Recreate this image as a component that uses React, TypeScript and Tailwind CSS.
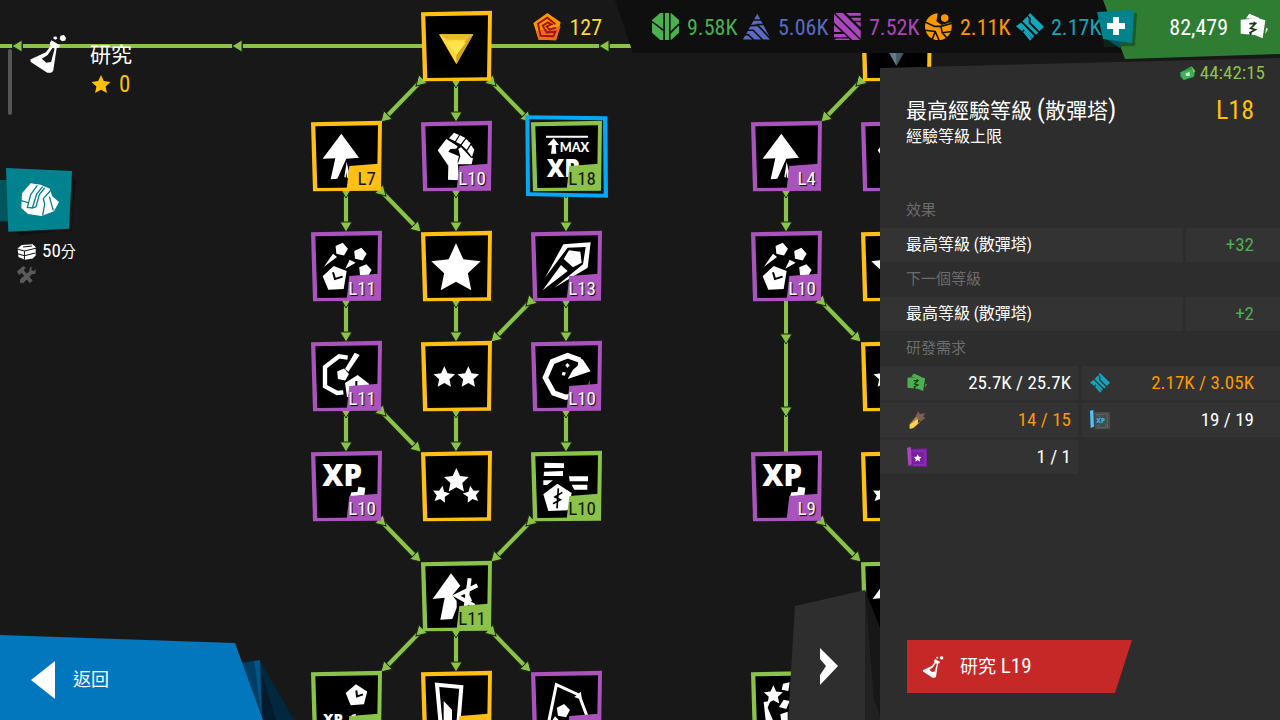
import React from 'react';

type Tone = 'gold' | 'purple' | 'green';

interface TreeNode {
  col: number;
  row: number;
  tone: Tone;
  icon: keyof typeof glyphs;
  title: string;
  level?: string;
  hasBadge?: boolean;
  selected?: boolean;
}

const toneColors: Record<Tone, string> = {
  gold: '#ffc013',
  purple: '#ab53bd',
  green: '#8bc34a',
};

const pentagon = (cx: number, cy: number, r: number, turn = 0) =>
  Array.from({ length: 5 }, (_, i) => {
    const a = ((i * 72 - 90 + turn) * Math.PI) / 180;
    return `${(cx + r * Math.cos(a)).toFixed(1)},${(cy + r * Math.sin(a)).toFixed(1)}`;
  }).join(' ');

const star = (cx: number, cy: number, r: number, turn = 0) =>
  Array.from({ length: 10 }, (_, i) => {
    const a = ((i * 36 - 90 + turn) * Math.PI) / 180;
    const d = i % 2 ? r * 0.48 : r;
    return `${(cx + d * Math.cos(a)).toFixed(1)},${(cy + d * Math.sin(a)).toFixed(1)}`;
  }).join(' ');

// All node glyphs share a 216 x 216 box
const glyphs = {
  goldGem: (
    <>
      <path d="M54 70H157L106 160Z" fill="#fdd835" />
      <path d="M54 70H157L136 86H78Z" fill="#e8bb2a" />
      <path d="M157 70L106 160L106 132L136 86Z" fill="#d3a51f" />
      <path d="M78 95L106 90L134 95L106 132Z" fill="#ffe44f" />
    </>
  ),
  steelGem: (
    <>
      <path d="M54 72H157L106 164Z" fill="#607d8b" />
      <path d="M157 72L106 164V120Z" fill="#455a64" />
    </>
  ),
  arrow: (
    <>
      <path d="M91 38L144 110L106 113L100 126L79 173L59 175L73 112L35 113Z" />
      <path d="M100 168L107 122L113 150V170H108L106 152L104 170Z" />
    </>
  ),
  fist: (
    <>
      <path d="M50 88L76 54L110 76L106 83L88 84L82 92L114 106L110 120L114 178L81 176L82 134Z" />
      <path d="M84 52L99 35L114 42L102 61ZM117 43L133 51L119 70L105 63ZM135 54L149 67L137 86L122 73ZM150 72L160 86L153 108L139 90Z" />
      <path d="M112 84L120 78L150 110L156 112L152 130H110L118 106Z" />
    </>
  ),
  maxXp: (
    <>
      <path d="M45 44H171V50H45ZM68 52L84 72H74L76 98H60L63 73H49Z" />
      <text x="86" y="94" fontSize="38" fontWeight="900" fontFamily="Lato, sans-serif">MAX</text>
      <text x="47" y="168" fontSize="73" fontWeight="800" fontFamily="'Open Sans', sans-serif">XP</text>
    </>
  ),
  shots: (
    <>
      <polygon points={pentagon(91, 55, 20, 12)} />
      <polygon points={pentagon(147, 70, 20, 12)} />
      <polygon points={pentagon(162, 119, 20, 12)} />
      <path d="M66 68L78 78L39 107ZM116 86L134 95L103 113Z" />
      <path d="M35 136L68 105L107 120L98 174L52 176Z" />
      <path d="M66 124L72 144L95 137" fill="none" stroke="#000" strokeWidth="6" />
    </>
  ),
  dart: (
    <>
      <path d="M97 40L179 34L170 110L70 170L156 100L164 48L110 50L42 140Z" />
      <path d="M114 58L148 62L152 95L126 109L98 84Z" />
      <path d="M90 102L110 120L35 178Z" />
    </>
  ),
  radar: (
    <>
      <path d="M110 50L84 46L42 78V136L78 156L97 154" fill="none" stroke="#fff" strokeWidth="13" />
      <polygon points={pentagon(95, 101, 19, 12)} />
      <path d="M131 35L146 42L112 92L102 84Z" />
      <path d="M102 126L140 102L174 128V168H108Z" />
      <path d="M136 120V138H152" fill="none" stroke="#000" strokeWidth="6" />
    </>
  ),
  orbit: (
    <>
      <path d="M148 58L110 44L64 62L43 110L68 156L104 169L130 163" fill="none" stroke="#fff" strokeWidth="16" />
      <path d="M144 50L156 56L179 91L110 114L126 86L140 74Z" />
      <path d="M109 66L116 73L109 81L103 73ZM95 92L105 95L101 104L92 102ZM173 128L176 116L174 136Z" />
    </>
  ),
  oneStar: <polygon points={star(105, 115, 78)} />,
  twoStars: (
    <>
      <polygon points={star(70, 110, 34)} />
      <polygon points={star(142, 110, 34)} />
    </>
  ),
  threeStars: (
    <>
      <polygon points={star(106, 90, 39)} />
      <polygon points={star(60, 131, 27, 10)} />
      <polygon points={star(152, 131, 27, -10)} />
    </>
  ),
  xpPlus: (
    <>
      <text x="34" y="106" fontSize="88" fontWeight="800" fontFamily="'Open Sans', sans-serif">XP</text>
      <path d="M142 107L163 110L160 132L117 138L121 124L139 123Z" />
    </>
  ),
  report: (
    <>
      <path d="M40 35L99 37V51H40ZM39 62L96 60V75H38ZM37 88H66L48 102H37ZM114 76H171V91H116ZM122 101H169V116H130Z" />
      <path d="M37 130L79 98L122 126L110 178L52 180Z" />
      <path d="M82 112L78 172M94 124L72 138L88 146L66 158" fill="none" stroke="#000" strokeWidth="5" />
    </>
  ),
  advance: (
    <>
      <path d="M90 37L118 74L94 103L107 120V140L94 174L58 176L71 110L35 114Z" />
      <path d="M146 52L134 138M169 73L106 104L160 134M132 88L148 122" fill="none" stroke="#fff" strokeWidth="12" />
    </>
  ),
  xpClock: (
    <>
      <polygon points={pentagon(137, 74, 34, -4)} />
      <path d="M136 58L138 76L156 70" fill="none" stroke="#000" strokeWidth="6" />
      <text x="36" y="158" fontSize="44" fontWeight="800" fontFamily="'Open Sans', sans-serif">XP</text>
      <path d="M122 132L134 128V140H120Z" />
    </>
  ),
  gate: (
    <>
      <path d="M48 41L121 48L111 170H60Z" fill="none" stroke="#fff" strokeWidth="12" />
      <path d="M68 90L93 116V170H68Z" />
    </>
  ),
  kite: (
    <>
      <path d="M52 158L76 41L144 72L167 133" fill="none" stroke="#fff" strokeWidth="9" />
      <path d="M130 78L150 62L152 86Z" />
      <polygon points={pentagon(96, 120, 21, 10)} />
      <path d="M72 136L84 148L60 173L64 148Z" />
    </>
  ),
  burst: (
    <>
      <polygon points={star(67, 73, 30)} />
      <path d="M38 93L58 90L50 110L66 148H44ZM96 38L116 34L112 60L92 56ZM84 108L98 86L116 90L106 114Z" />
      <path d="M88 130L110 122V158H92Z" />
    </>
  ),
};

const nodes: TreeNode[] = [
  { col: 456, row: 46, tone: 'gold', icon: 'goldGem', title: '散彈塔' },
  { col: 346, row: 156, tone: 'gold', icon: 'arrow', title: '威力', level: 'L7' },
  { col: 456, row: 156, tone: 'purple', icon: 'fist', title: '力量', level: 'L10' },
  { col: 566, row: 156, tone: 'green', icon: 'maxXp', title: '最高經驗等級', level: 'L18', selected: true },
  { col: 346, row: 266, tone: 'purple', icon: 'shots', title: '攻擊速度', level: 'L11' },
  { col: 456, row: 266, tone: 'gold', icon: 'oneStar', title: '一星' },
  { col: 566, row: 266, tone: 'purple', icon: 'dart', title: '彈速', level: 'L13' },
  { col: 346, row: 376, tone: 'purple', icon: 'radar', title: '轉速', level: 'L11' },
  { col: 456, row: 376, tone: 'gold', icon: 'twoStars', title: '二星' },
  { col: 566, row: 376, tone: 'purple', icon: 'orbit', title: '範圍', level: 'L10' },
  { col: 346, row: 486, tone: 'purple', icon: 'xpPlus', title: '經驗', level: 'L10' },
  { col: 456, row: 486, tone: 'gold', icon: 'threeStars', title: '三星' },
  { col: 566, row: 486, tone: 'green', icon: 'report', title: '價格', level: 'L10' },
  { col: 456, row: 596, tone: 'green', icon: 'advance', title: '升級', level: 'L11' },
  { col: 346, row: 706, tone: 'green', icon: 'xpClock', title: '經驗時間', hasBadge: true },
  { col: 456, row: 706, tone: 'gold', icon: 'gate', title: '能力', hasBadge: true },
  { col: 566, row: 706, tone: 'purple', icon: 'kite', title: '投射', hasBadge: true },
  { col: 896, row: 46, tone: 'gold', icon: 'steelGem', title: '鋼塔' },
  { col: 786, row: 156, tone: 'purple', icon: 'arrow', title: '威力', level: 'L4' },
  { col: 896, row: 156, tone: 'purple', icon: 'fist', title: '力量' },
  { col: 786, row: 266, tone: 'purple', icon: 'shots', title: '攻擊速度', level: 'L10' },
  { col: 896, row: 266, tone: 'gold', icon: 'oneStar', title: '一星' },
  { col: 896, row: 376, tone: 'gold', icon: 'twoStars', title: '二星' },
  { col: 786, row: 486, tone: 'purple', icon: 'xpPlus', title: '經驗', level: 'L9' },
  { col: 896, row: 486, tone: 'gold', icon: 'threeStars', title: '三星' },
  { col: 896, row: 596, tone: 'green', icon: 'advance', title: '升級' },
  { col: 786, row: 706, tone: 'green', icon: 'burst', title: '爆發' },
];

// [fromX, fromY, toX, toY] between node centres
const links = [
  [456, 46, 346, 156], [456, 46, 456, 156], [456, 46, 566, 156],
  [346, 156, 346, 266], [346, 156, 456, 266], [456, 156, 456, 266], [566, 156, 566, 266],
  [346, 266, 346, 376], [456, 266, 456, 376], [566, 266, 566, 376], [566, 266, 456, 376],
  [346, 376, 346, 486], [346, 376, 456, 486], [456, 376, 456, 486], [566, 376, 566, 486],
  [346, 486, 456, 596], [566, 486, 456, 596],
  [456, 596, 346, 706], [456, 596, 456, 706], [456, 596, 566, 706],
  [896, 46, 786, 156], [786, 156, 786, 266], [786, 266, 896, 376], [786, 486, 896, 596],
];

const Arrowhead = ({ x, y, angle }: { x: number; y: number; angle: number }) => (
  <path d="M0 0L-10 -6V6Z" fill="#8bc34a" stroke="#1c2a12" transform={`translate(${x} ${y}) rotate(${angle})`} />
);

const Link = ({ points }: { points: number[] }) => {
  const [x1, y1, x2, y2] = points;
  const dx = Math.sign(x2 - x1);
  const dy = Math.sign(y2 - y1);
  const angle = (Math.atan2(dy, dx) * 180) / Math.PI;
  const tip = dx ? 5 : 7;
  const back = dx ? 7 : 10;
  const ax = x1 + dx * 35;
  const ay = y1 + 35;
  const bx = x2 - dx * 35;
  const by = y2 - 34;
  const line = `M${ax} ${ay}L${bx - dx * back} ${by - dy * back}`;
  return (
    <g>
      <path d={line} stroke="#1c2a12" strokeWidth="6" />
      <path d={line} stroke="#8bc34a" strokeWidth="4" />
      <Arrowhead x={ax + dx * tip} y={ay + dy * tip} angle={angle} />
      <Arrowhead x={bx} y={by} angle={angle} />
    </g>
  );
};

const ResearchNode = ({ node }: { node: TreeNode }) => {
  const color = toneColors[node.tone];
  return (
    <button
      type="button"
      aria-label={node.level ? `${node.title} ${node.level}` : node.title}
      className="absolute size-[72px]"
      style={{ left: node.col - 35, top: node.row - 35 }}
    >
      <svg viewBox="0 0 216 216" className="size-full overflow-visible" fill="#fff">
        {node.selected && (
          <>
            <path d="M-17 -17L229 -14L231 230L-15 225Z" fill="#03a9f4" />
            <path d="M-5 -5L216 -2L218 218L-3 214Z" fill="#10181c" />
          </>
        )}
        <path d="M0 4L213 -1L210 209L6 211Z" fill={color} />
        <path d="M13 16L201 13L198 199L19 201Z" fill="#000" />
        {glyphs[node.icon]}
        {(node.level || node.hasBadge) && <path d="M115 135L203 128L201 204H107Z" fill={color} />}
      </svg>
      {node.level && (
        <span
          className={`absolute right-[7px] bottom-1 text-[19px] leading-5 ${
            node.tone === 'purple' ? 'text-white [text-shadow:1px_1px_1px_#000]' : 'text-[#151515]'
          }`}
        >
          {node.level}
        </span>
      )}
    </button>
  );
};

const ResearchTree = () => (
  <div className="absolute inset-0 overflow-hidden">
    <svg className="absolute inset-0 size-full" fill="none">
      <path d="M0 46H631" stroke="#8bc34a" strokeWidth="4" />
      {[12, 232, 599].map((x) => (
        <g key={x}>
          <path d={`M${x} 46H${x + 11}`} stroke="#1c2a12" strokeWidth="4" />
          <Arrowhead x={x} y={46} angle={180} />
        </g>
      ))}
      <path d="M786 300V452" stroke="#8bc34a" strokeWidth="4" />
      <Arrowhead x={786} y={344} angle={90} />
      <Arrowhead x={786} y={417} angle={90} />
      {links.map((points) => (
        <Link key={points.join('-')} points={points} />
      ))}
    </svg>
    {nodes.map((node) => (
      <ResearchNode key={`${node.col}-${node.row}`} node={node} />
    ))}
  </div>
);

const FlaskIcon = ({ className }: { className: string }) => (
  <svg viewBox="0 0 104 110" className={className} fill="currentColor">
    <path
      fillRule="evenodd"
      d="M62 15L68 19L84 28L87 31L84 36L77 38L67 104L61 109L50 109L2 78L1 71L46 50L60 31L57 24ZM66 36L51 58L34 69L47 80L61 78L71 40Z"
    />
    <path d="M88 2L98 0L104 8L102 16L93 18L86 12ZM68 5L76 4L79 10L74 14L68 11Z" />
  </svg>
);

const CashIcon = ({ className }: { className: string }) => (
  <svg viewBox="0 0 84 80" className={className} fill="currentColor">
    <path d="M28 0L60 14L40 16L18 14ZM2 18L54 14L76 20L68 74L44 64L2 60ZM78 42L84 46L76 60Z" />
    <path d="M28 30L46 30L32 44L46 48L28 58M44 24L42 30M34 58L30 64" fill="none" stroke="#123c17" strokeWidth="5" />
  </svg>
);

const CyanOreIcon = ({ className }: { className: string }) => (
  <svg viewBox="0 0 88 88" className={className} fill="currentColor">
    <path d="M44 0L88 43L74 57L46 30V16L38 8Z" />
    <path d="M36 10L40 16V32L70 62L63 68L20 26Z" />
    <path d="M0 42L16 30L57 72L51 79L22 50L20 58Z" />
    <path d="M22 60L29 56L50 80L44 87Z" />
  </svg>
);

const resources = [
  {
    name: '標量',
    amount: '9.58K',
    color: 'text-[#4caf50]',
    icon: (
      <>
        <path d="M26 0H60L85 22V62L60 85H26L0 62V22Z" />
        <path d="M38 0V85M56 0V85M0 27L38 56M85 35L56 64" stroke="#0f0f0f" strokeWidth="5" />
      </>
    ),
  },
  {
    name: '向量',
    amount: '5.06K',
    color: 'text-[#5c6bc0]',
    icon: (
      <>
        <path d="M45 2L88 83H0Z" />
        <path d="M28 22H62M22 40L46 38L88 83M10 54H32L62 85M0 68H16L34 85M42 36H74" fill="none" stroke="#0f0f0f" strokeWidth="5" />
      </>
    ),
  },
  {
    name: '矩陣',
    amount: '7.52K',
    color: 'text-[#ab47bc]',
    icon: (
      <>
        <path d="M0 0H28L84 56V85H58L0 30Z" />
        <path d="M38 0H84V9H48ZM53 15H84V24H62ZM67 29H84V45ZM0 38L24 60H0ZM0 66H32L42 76H0ZM8 80H46L50 85H0Z" />
        <path d="M0 0L84 84" stroke="#0f0f0f" strokeWidth="5" />
      </>
    ),
  },
  {
    name: '張量',
    amount: '2.11K',
    color: 'text-[#ff9800]',
    icon: (
      <>
        <circle cx="42" cy="43" r="42" />
        <path d="M40 0L36 26L52 38L84 28V0Z" fill="#0f0f0f" />
        <circle cx="62" cy="16" r="12" />
        <path d="M0 28L30 42L50 42L85 32M0 54L32 58L44 85M32 58L22 85M50 42L54 62L85 58M56 64L72 82" fill="none" stroke="#0f0f0f" strokeWidth="5" />
      </>
    ),
  },
];

const TopBar = () => (
  <header className="relative z-10 flex h-[53px] justify-end text-[22px]">
    <div className="flex items-center gap-2 pr-[13px] text-[#fdd835]">
      <svg viewBox="0 0 82 84" className="size-7">
        <path d="M42 0L82 28L68 82L16 80L0 30Z" fill="#ff9800" />
        <path d="M16 80L8 54L82 40L68 82Z" fill="#ef6c1a" />
        <path
          d="M66 34L42 14L14 32L22 68L60 70L66 56L40 58L28 38L44 28L54 34L40 40L48 50L68 44"
          fill="none"
          stroke="#a31515"
          strokeWidth="6"
        />
      </svg>
      <span className="pt-0.5">127</span>
    </div>
    <div className="flex items-center bg-[#0f0f0f] pl-[37px] [clip-path:polygon(0_0,100%_0,100%_100%,18px_100%)]">
      {resources.map((resource) => (
        <div key={resource.name} className={`flex w-[91px] items-center gap-[7px] ${resource.color}`}>
          <svg viewBox="0 0 88 88" className="size-7 shrink-0" fill="currentColor" aria-label={resource.name}>
            {resource.icon}
          </svg>
          <span className="pt-0.5">{resource.amount}</span>
        </div>
      ))}
      <div className="flex w-[124px] items-center gap-[7px] text-[#12a5bb]">
        <CyanOreIcon className="size-7 shrink-0" />
        <span className="pt-0.5">2.17K</span>
      </div>
    </div>
    <div className="relative -ml-[37px] flex h-[59px] w-[177px] items-center justify-end gap-3 bg-[#2e7d32] pr-3 pb-1.5 text-white [clip-path:polygon(0_0,100%_0,100%_54px,22px_100%)]">
      <span className="pt-0.5">82,479</span>
      <CashIcon className="size-7" />
    </div>
    <button type="button" aria-label="購買" className="absolute top-[9px] right-[143px] h-[40px] w-[41px]">
      <svg viewBox="0 0 41 40" className="size-full">
        <path d="M5 5L41 4L39 37L8 38Z" fill="#0a3a1a" opacity=".5" />
        <path d="M10 30H26L24 39Z" fill="#005662" />
        <path d="M1 3L38 1L36 34L7 30Z" fill="#00838f" />
        <path d="M17 8H23V14H29V20H23V26H17V20H11V14H17Z" fill="#fff" />
      </svg>
    </button>
  </header>
);

const SideMenu = () => (
  <div className="flex w-[300px] flex-col justify-between">
    <div>
      <div className="-mt-5 flex">
        <div className="mt-4 ml-2 h-[66px] w-1 rounded-full bg-[#555]" />
        <FlaskIcon className="mt-0.5 ml-[18px] h-[38px] w-[36px] text-white" />
        <div className="ml-6">
          <h1 className="mt-2 text-[21px] leading-7 text-white">研究</h1>
          <div className="flex items-center gap-2 text-[23px] leading-8 text-[#ffc107]">
            <svg viewBox="0 0 20 20" className="ml-px size-5" fill="currentColor">
              <polygon points={star(10, 10, 10)} />
            </svg>
            0
          </div>
        </div>
      </div>
      <button type="button" aria-label="背包" className="mt-[53px] block h-[68px] w-[76px]">
        <svg viewBox="0 0 228 204" className="size-full">
          <path d="M0 36H30V160H0Z" fill="#00565c" />
          <path d="M40 190L216 190L220 30L228 40L212 186L60 202Z" fill="#000" opacity=".35" />
          <path d="M18 0L216 9L207 182L25 191Z" fill="#00838f" />
          <path d="M92 46L122 50L150 62L156 84L177 102L162 130L124 144L84 138L64 120L66 76Z" fill="#fff" />
          <path
            d="M112 52L92 80L82 118L97 120L110 78L128 56M134 60L118 80L108 116L98 120M153 66L130 92L134 108L128 142M148 86L160 128M64 98L84 104"
            fill="none"
            stroke="#00838f"
            strokeWidth="4"
          />
        </svg>
      </button>
      <div className="mt-[3px] ml-[17px] flex items-center gap-[6px] text-white">
        <svg viewBox="0 0 56 46" className="h-4 w-[19px]" fill="currentColor">
          <path d="M2 12L14 2L46 0L55 8V34L46 42L24 46L4 38Z" />
          <path d="M0 14L22 20L56 12M2 28L22 34L54 26M22 20V46M18 8L44 5" fill="none" stroke="#171817" strokeWidth="3" />
        </svg>
        <span className="text-[19px] leading-6">
          50<span className="text-[15px]">分</span>
        </span>
      </div>
      <svg viewBox="0 0 56 52" className="mt-0.5 ml-[17px] h-[18px] w-[19px]" fill="#5a5a5a">
        <path d="M0 16L18 0L26 4L20 12L46 42L38 50L14 20L6 26Z" />
        <path d="M38 4L44 2L42 12L50 14L56 8L54 22L44 24L18 50L8 48L10 38L36 16Z" />
      </svg>
    </div>

    <button type="button" className="relative h-[85px] w-[294px] text-left">
      <svg viewBox="0 0 294 85" className="absolute inset-0 size-full">
        <path d="M240 28L260 25L294 85H255Z" fill="#01283f" />
        <path d="M240 28L254 26L262 85Z" fill="#013e63" />
        <path d="M254 26L260 25L262 85Z" fill="#015688" />
        <path d="M262 40L276 85H262Z" fill="#011c2c" />
        <path d="M0 0L235 8L263 85H0Z" fill="#0277bd" />
      </svg>
      <span className="relative flex items-center gap-[18px] pt-1 pl-[31px] text-[18px] text-white">
        <svg viewBox="0 0 24 38" className="h-[38px] w-6" fill="currentColor">
          <path d="M24 0V38L0 19Z" />
        </svg>
        返回
      </span>
    </button>
  </div>
);

const effects = [
  { heading: '效果', label: '最高等級 (散彈塔)', value: '+32' },
  { heading: '下一個等級', label: '最高等級 (散彈塔)', value: '+2' },
];

const requirements = [
  { name: '金錢', text: '25.7K / 25.7K', color: 'text-white', icon: <CashIcon className="size-5 text-[#4caf50]" /> },
  { name: '張量', text: '2.17K / 3.05K', color: 'text-[#ff9800]', icon: <CyanOreIcon className="size-5 text-[#12a5bb]" /> },
  {
    name: '彈殼',
    text: '14 / 15',
    color: 'text-[#ff9800]',
    icon: (
      <svg viewBox="0 0 60 60" className="size-5">
        <path d="M8 42L28 18L44 32L20 54L8 56Z" fill="#a8843c" />
        <path d="M8 44L30 28L38 36L18 54L8 56Z" fill="#ffd34f" />
        <path d="M26 18L34 4L38 12L54 10L48 20L56 24L42 34Z" fill="#7d5f59" />
        <path d="M34 28L42 34L32 40Z" fill="#4b3835" />
      </svg>
    ),
  },
  {
    name: '經驗藍圖',
    text: '19 / 19',
    color: 'text-white',
    icon: (
      <svg viewBox="0 0 60 60" className="size-5">
        <path d="M12 6H60V58H14Z" fill="#474b4d" />
        <path d="M18 14L52 12V52L20 54M18 12L34 24M44 40L54 52M22 50L30 40" fill="none" stroke="#6a7073" strokeWidth="2" />
        <path d="M0 2L10 0L12 50L2 54Z" fill="#4fc3f7" />
        <text x="19" y="40" fontSize="19" fontWeight="800" fill="#29b6f6" fontFamily="'Open Sans', sans-serif">XP</text>
      </svg>
    ),
  },
  {
    name: '星級藍圖',
    text: '1 / 1',
    color: 'text-white',
    icon: (
      <svg viewBox="0 0 60 60" className="size-5">
        <path d="M10 6L60 4V60L6 58Z" fill="#7b1fa2" />
        <path d="M20 12H54V54H18" fill="none" stroke="#a04cc0" strokeWidth="2" />
        <path d="M0 2L12 0L14 52L4 56Z" fill="#ab47bc" />
        <polygon points={star(32, 34, 12)} fill="#fff" />
      </svg>
    ),
  },
];

const DetailPanel = () => (
  <aside className="flex w-[400px] flex-col bg-[#2c2d2c] text-white [clip-path:polygon(0_15px,100%_5px,100%_100%,0_100%)]">
    <div className="mt-2 flex h-6 items-center justify-end gap-1 pr-[15px] text-[19px] text-[#8bc34a]">
      <svg viewBox="0 0 48 44" className="size-4">
        <path d="M4 18L34 2L46 16L42 34L12 44L0 32Z" fill="#2e9b45" />
        <path d="M0 20L34 12L42 30L10 42Z" fill="#43b05c" />
        <path d="M16 24L28 18L30 30L20 32Z" fill="#c8f0cf" />
        <path d="M34 2L46 16L40 22Z" fill="#8bc34a" />
      </svg>
      44:42:15
    </div>
    <div className="mt-2 flex items-center justify-between pr-[26px] pl-[26px]">
      <h2 className="text-[21px] leading-8">
        最高經驗等級 <span className="text-[26px]"> (</span>散彈塔<span className="text-[26px]">)</span>
      </h2>
      <span className="text-[26px] leading-8 text-[#ffc107]">L18</span>
    </div>
    <p className="pl-[26px] text-[16px] leading-5">經驗等級上限</p>

    <dl className="mt-[46px]">
      {effects.map((effect) => (
        <div key={effect.heading}>
          <dt className="pl-[26px] text-[15px] leading-[35px] text-[#6b6c6b]">{effect.heading}</dt>
          <dd className="flex h-[34px] items-center gap-[3px] text-[19px]">
            <span className="h-full flex-1 bg-[#323332] pl-[26px] text-[16px] leading-[34px]">{effect.label}</span>
            <span className="h-full w-[94px] bg-[#323332] pr-[26px] text-right leading-[34px] text-[#4caf50]">
              {effect.value}
            </span>
          </dd>
        </div>
      ))}
    </dl>

    <h3 className="pl-[26px] text-[15px] leading-[35px] text-[#6b6c6b]">研發需求</h3>
    <ul className="grid grid-cols-[198px_1fr] gap-x-1 gap-y-[3px]">
      {requirements.map((item, index) => (
        <li
          key={item.name}
          aria-label={item.name}
          className={`flex h-[34px] items-center justify-between bg-[#323332] text-[19px] ${item.color} ${
            index % 2 ? 'pr-[26px] pl-2' : 'pr-[7px] pl-[27px]'
          }`}
        >
          {item.icon}
          <span>{item.text}</span>
        </li>
      ))}
    </ul>

    <button
      type="button"
      className="mt-auto mb-[27px] ml-[27px] flex h-[53px] w-[225px] items-center bg-[#c62828] pl-[15px] text-[21px] [clip-path:polygon(0_0,100%_0,208px_100%,0_100%)]"
    >
      <FlaskIcon className="mr-4 size-[22px]" />
      <span>
        <span className="text-[18px]">研究</span> L19
      </span>
    </button>
  </aside>
);

const App: React.FC = () => {
  return (
    <div className="relative h-screen overflow-hidden bg-[#171817] [font-family:'Roboto_Condensed','Liberation_Sans_Narrow','Noto_Sans_CJK_TC',sans-serif]">
      <ResearchTree />
      <div className="relative flex h-full flex-col">
        <TopBar />
        <main className="flex flex-1 justify-end">
          <SideMenu />
          <div className="flex-1" />
          <button type="button" aria-label="收合" className="h-[130px] w-[92px] self-end">
            <svg viewBox="0 0 92 130" className="size-full">
              <path d="M77 0L92 38V130H77Z" fill="#161716" />
              <path d="M77 0L86 110L92 126V130H77Z" fill="#202120" />
              <path d="M7 16L77 0V130H0Z" fill="#2d2e2d" />
              <path d="M32 58L50 76L32 95V85L38 76L32 69Z" fill="#fff" />
            </svg>
          </button>
          <DetailPanel />
        </main>
      </div>
    </div>
  );
};

export default App;
